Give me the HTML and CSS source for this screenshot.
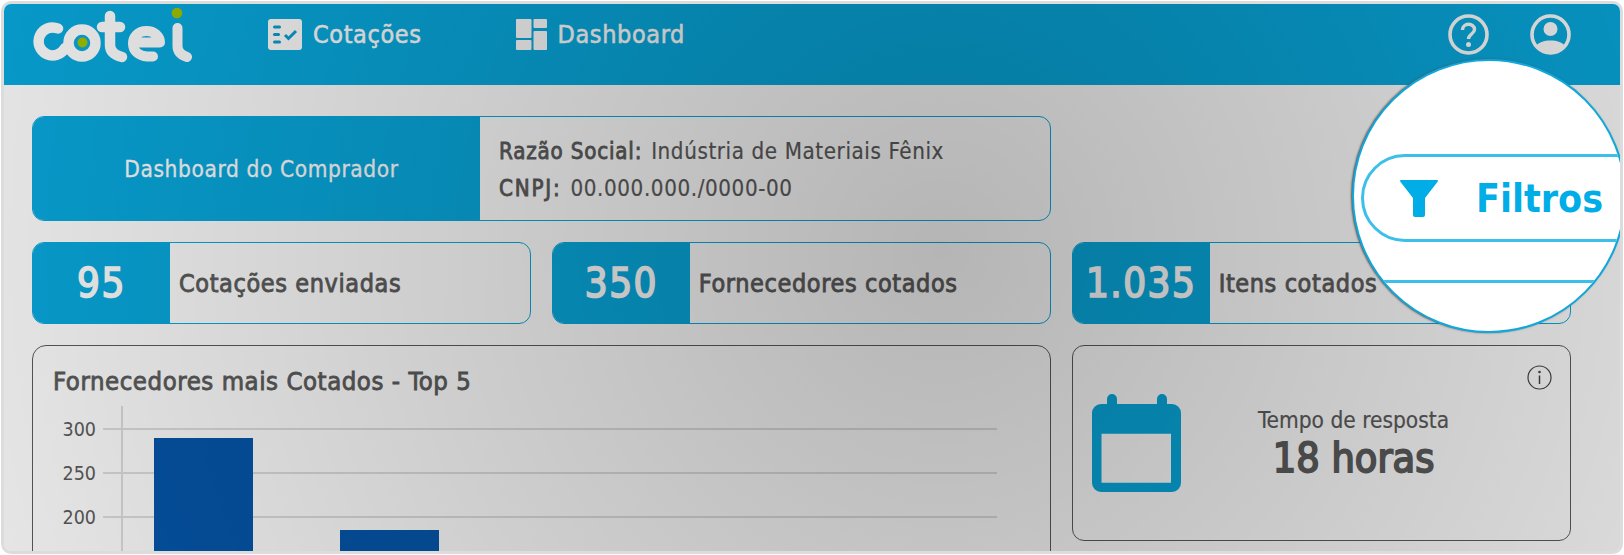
FILE: index.html
```html
<!DOCTYPE html>
<html lang="pt-BR">
<head>
  <meta charset="UTF-8">
  <title>Dashboard | Cotei</title>
  <link rel="stylesheet" href="styles.css">
</head>
<body>

<div class="frame">
  <header class="topbar">
    <svg class="logo" viewBox="0 -2 160 58" aria-label="cotei">
      <g fill="none" stroke="#fff" stroke-width="10.500" stroke-linecap="round" stroke-linejoin="round">
        <path d="M26 19.500 A14 14 0 1 0 33 39"/>
        <circle cx="50" cy="34" r="13.500"/>
        <path d="M78 7 V36 C78 42 82 46 90 48"/>
        <path d="M70 18 H88"/>
        <path d="M106 33.500 H128 C128 27 122 22 114.500 22 C106 22 101 28 101 34.500 C101 42 107 47 115 47.500 H121" stroke-width="10"/>
        <path d="M145.500 19 V37 C145.500 43 149 46 155 48" stroke-width="10"/>
      </g>
      <circle cx="50.500" cy="33.500" r="5" fill="#a4c400"/>
      <circle cx="145" cy="4" r="5.300" fill="#a4c400"/>
    </svg>

    <nav class="nav">
      <a class="nav-item nav-quotes">
        <svg width="34" height="31" viewBox="0 0 34 31">
          <rect width="34" height="31" rx="3" fill="#fff"/>
          <g fill="#089fd2">
            <rect x="5" y="6.500" width="8" height="3" rx="1.500"/>
            <rect x="5" y="14" width="7" height="3" rx="1.500"/>
            <rect x="5" y="21.500" width="8" height="3" rx="1.500"/>
          </g>
          <path d="M17 16 L20.500 19.500 L28 12" fill="none" stroke="#089fd2" stroke-width="3"/>
        </svg>
        Cotações
      </a>
      <a class="nav-item nav-dash">
        <svg width="31" height="31" viewBox="0 0 31 31" fill="#fff">
          <rect width="15.500" height="19" rx="1"/>
          <rect y="21" width="15.500" height="10" rx="1"/>
          <rect x="17.500" width="13.500" height="9" rx="1"/>
          <rect x="17.500" y="12" width="13.500" height="19" rx="1"/>
        </svg>
        Dashboard
      </a>
    </nav>

    <div class="topbar-icons">
      <svg width="41" height="41" viewBox="0 0 41 41">
        <circle cx="20.500" cy="20.500" r="18.500" fill="none" stroke="#fff" stroke-width="3.600"/>
        <path d="M14.500 16 C14.500 8.500 26.500 8.500 26.500 15.500 C26.500 20 20.500 20 20.500 25" fill="none" stroke="#fff" stroke-width="3.400"/>
        <circle cx="20.500" cy="30.500" r="2.500" fill="#fff"/>
      </svg>
      <svg width="41" height="41" viewBox="0 0 41 41">
        <circle cx="20.500" cy="20.500" r="18.500" fill="none" stroke="#fff" stroke-width="3.600"/>
        <circle cx="20.500" cy="15" r="7" fill="#fff"/>
        <path d="M6 32 C10 24.500 31 24.500 35 32 C31 42 10 42 6 32 Z" fill="#fff"/>
      </svg>
    </div>
  </header>

  <main class="content">
    <section class="hero">
      <div class="hero-title">Dashboard do Comprador</div>
      <div class="hero-info">
        <p><strong>Razão Social:</strong> Indústria de Materiais Fênix</p>
        <p class="cnpj"><strong>CNPJ:</strong> 00.000.000./0000-00</p>
      </div>
    </section>
    <div class="hero-gap"></div>

    <section class="stat">
      <div class="stat-num">95</div>
      <div class="stat-label">Cotações enviadas</div>
    </section>
    <section class="stat">
      <div class="stat-num">350</div>
      <div class="stat-label">Fornecedores cotados</div>
    </section>
    <section class="stat">
      <div class="stat-num">1.035</div>
      <div class="stat-label">Itens cotados</div>
    </section>

    <section class="chart-card">
      <h3>Fornecedores mais Cotados - Top 5</h3>
      <svg class="chart" width="950" height="200" viewBox="0 0 950 200">
        <g stroke="#dedede" stroke-width="2">
          <path d="M50 29 H944"/>
          <path d="M50 73 H944"/>
          <path d="M50 117 H944"/>
          <path d="M69 6 V200"/>
        </g>
        <g class="chart-label" text-anchor="end">
          <text x="43" y="36">300</text>
          <text x="43" y="80">250</text>
          <text x="43" y="124">200</text>
        </g>
        <rect x="101" y="38" width="99" height="162" fill="#0557ac"/>
        <rect x="287" y="130" width="99" height="70" fill="#0557ac"/>
      </svg>
    </section>

    <section class="time-card">
      <svg class="time-icon" width="89" height="98" viewBox="0 0 89 98">
        <path fill="#08aadf" fill-rule="evenodd" d="M15 5 A5 5 0 0 1 25 5 V10 H65 V5 A5 5 0 0 1 75 5 V10 H80 A9 9 0 0 1 89 19 V89 A9 9 0 0 1 80 98 H9 A9 9 0 0 1 0 89 V19 A9 9 0 0 1 9 10 H15 Z M9.500 39.700 V88.700 H79 V39.700 Z"/>
      </svg>
      <div class="time-text">
        <div class="time-label">Tempo de resposta</div>
        <div class="time-value">18 horas</div>
      </div>
      <svg class="info-icon" width="25" height="25" viewBox="0 0 25 25">
        <circle cx="12.500" cy="12.500" r="11.500" fill="none" stroke="#444" stroke-width="1.200"/>
        <circle cx="12.500" cy="7" r="1.300" fill="#444"/>
        <path d="M12.500 10.500 V19" stroke="#444" stroke-width="1.500"/>
      </svg>
    </section>
  </main>

  <div class="shade"></div>

  <div class="magnifier">
    <div class="filter-btn">
      <svg width="38" height="37" viewBox="0 0 38 37">
        <path fill="#00ade6" d="M1 0 H37 A1 1 0 0 1 37.800 1.500 L25 18 V35 A2 2 0 0 1 23 37 H15 A2 2 0 0 1 13 35 V18 L0.200 1.500 A1 1 0 0 1 1 0 Z"/>
      </svg>
      <span>Filtros</span>
    </div>
    <div class="filter-line"></div>
  </div>
</div>

</body>
</html>
```

FILE: styles.css
```css
* {
  box-sizing: border-box;
}
body {
  margin: 0;
  background: #fff;
  overflow: hidden;
  font-family: "DejaVu Sans", sans-serif;
  font-stretch: condensed;
  color: #5c5c5c;
}
strong {
  margin-right: 2px;
  font-weight: normal;
  letter-spacing: 0.8px;
  -webkit-text-stroke: 0.8px currentColor;
}
.cnpj strong {
  letter-spacing: 1.8px;
}
.frame {
  position: relative;
  width: 1622px;
  height: 553px;
  margin: 1px;
  border: 3px solid #dcdcdc;
  border-radius: 10px;
  overflow: hidden;
  background: #fff;
}
.topbar {
  display: flex;
  align-items: flex-start;
  height: 81px;
  padding-left: 28px;
  background: #08aadf;
  color: #fff;
}
.logo {
  width: 160px;
  height: 58px;
  margin-top: 3px;
  flex: none;
}
.nav {
  display: flex;
  margin-top: 15px;
  letter-spacing: 0.6px;
}
.nav-item {
  display: flex;
  align-items: center;
  gap: 11px;
  font-size: 25px;
  -webkit-text-stroke: 0.5px currentColor;
}
.nav-quotes {
  margin-left: 76px;
}
.nav-dash {
  margin-left: 94px;
}
.topbar-icons {
  display: flex;
  gap: 41px;
  margin: 10px 49px 0 auto;
}
.content {
  display: grid;
  grid-template-columns: repeat(3, 1fr);
  grid-template-rows: 105px 82px 260px;
  gap: 21px;
  padding: 31px 49.5px 0 28px;
}
.hero {
  grid-column: span 2;
  display: flex;
  border: 1px solid #08aadf;
  border-radius: 12px;
  overflow: hidden;
}
.hero-title {
  display: flex;
  align-items: center;
  justify-content: center;
  width: 447px;
  padding-left: 10px;
  background: #08aadf;
  color: #fff;
  font-size: 22.5px;
  letter-spacing: 0.6px;
  -webkit-text-stroke: 0.3px currentColor;
}
.hero-info {
  padding: 16px 19px;
  font-size: 22.2px;
  letter-spacing: 0.6px;
  -webkit-text-stroke: 0.2px currentColor;
}
.hero-info p {
  margin: 0;
  line-height: 37px;
}
.stat {
  display: flex;
  border: 1px solid #08aadf;
  border-radius: 12px;
  overflow: hidden;
}
.stat-num {
  display: flex;
  align-items: center;
  justify-content: center;
  flex: none;
  width: 137px;
  background: #08aadf;
  color: #fff;
  font-size: 40px;
  letter-spacing: 1.5px;
  -webkit-text-stroke: 1.6px currentColor;
}
.stat-label {
  display: flex;
  align-items: center;
  padding-left: 9px;
  font-size: 25px;
  letter-spacing: 0.6px;
  -webkit-text-stroke: 0.8px currentColor;
}
.chart-card {
  grid-column: span 2;
  padding: 20px;
  border: 1px solid #5c5c5c;
  border-radius: 14px;
}
.chart-card h3 {
  margin: 0 0 3px;
  font-size: 25.5px;
  font-weight: normal;
  line-height: 31px;
  letter-spacing: 0.55px;
  -webkit-text-stroke: 0.8px currentColor;
}
.chart {
  display: block;
}
.chart-label {
  font-size: 19.5px;
  fill: #5c5c5c;
}
.time-card {
  position: relative;
  display: flex;
  align-items: center;
  height: 196px;
  padding: 0 43px 0 19px;
  border: 1px solid #5c5c5c;
  border-radius: 12px;
}
.time-icon {
  flex: none;
  margin-top: -1px;
}
.time-text {
  flex: 1;
  text-align: center;
}
.time-label {
  font-size: 22.5px;
  line-height: 30px;
  -webkit-text-stroke: 0.2px currentColor;
}
.time-value {
  font-size: 41px;
  line-height: 46px;
  -webkit-text-stroke: 1.8px currentColor;
}
.info-icon {
  position: absolute;
  top: 19px;
  right: 18px;
}
.shade {
  position: absolute;
  inset: 0;
  background: radial-gradient(circle at 58% 45%, rgba(0, 0, 0, 0.29), rgba(0, 0, 0, 0.1));
  pointer-events: none;
}
.magnifier {
  position: absolute;
  left: 1348px;
  top: 55px;
  width: 274px;
  height: 274px;
  padding-top: 93px;
  border: 2px solid #0ea8dd;
  border-radius: 50%;
  background: #fff;
  box-shadow: -1px 0 2px #555;
  overflow: hidden;
}
.filter-btn {
  display: flex;
  align-items: center;
  height: 88px;
  margin: 0 -60px 0 7px;
  padding-left: 36px;
  gap: 38px;
  border: 3px solid #3cc0ea;
  border-radius: 44px;
  color: #00ade6;
  font-size: 39px;
  font-weight: bold;
}
.filter-line {
  height: 3px;
  margin-top: 38px;
  background: #3cc0ea;
}
```
